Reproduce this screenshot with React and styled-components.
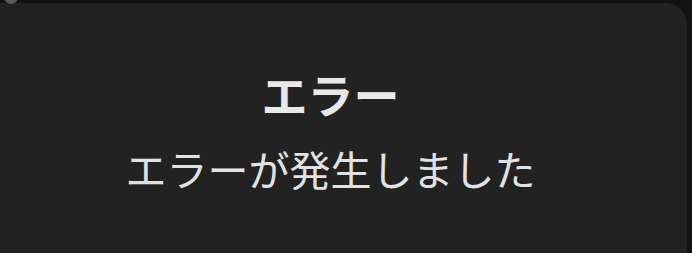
import React from "react";
import styled, { createGlobalStyle } from "styled-components";

const Global = createGlobalStyle`
  html, body {
    margin: 0;
    padding: 0;
    background: #121212;
    overflow: hidden;
  }
  body {
    font-family: "Noto Sans CJK JP", "Noto Sans", sans-serif;
  }
`;

const Page = styled.div`
  position: relative;
  width: 692px;
  height: 253px;
  padding-top: 3px;
  box-sizing: border-box;
  overflow: hidden;
`;

const Dot = styled.span`
  position: absolute;
  left: 4px;
  top: -10px;
  width: 14px;
  height: 14px;
  border-radius: 50%;
  background: #5a5a5a;
`;

const Dialog = styled.div`
  margin-left: -26px;
  width: 713px;
  height: 290px;
  background: #222222;
  border-radius: 22px;
  display: flex;
  flex-direction: column;
  align-items: center;
  padding-top: 64px;
  box-sizing: border-box;
`;

const Title = styled.h2`
  margin: 0;
  font-size: 46px;
  font-weight: 700;
  line-height: 52px;
  color: #e8e8e8;
`;

const Message = styled.p`
  margin: 23px 0 0;
  font-size: 41px;
  font-weight: 400;
  line-height: 52px;
  color: #e2e2e2;
`;

export default function App() {
  return (
    <>
      <Global />
      <Page>
        <Dot />
        <Dialog>
          <Title>エラー</Title>
          <Message>エラーが発生しました</Message>
        </Dialog>
      </Page>
    </>
  );
}
